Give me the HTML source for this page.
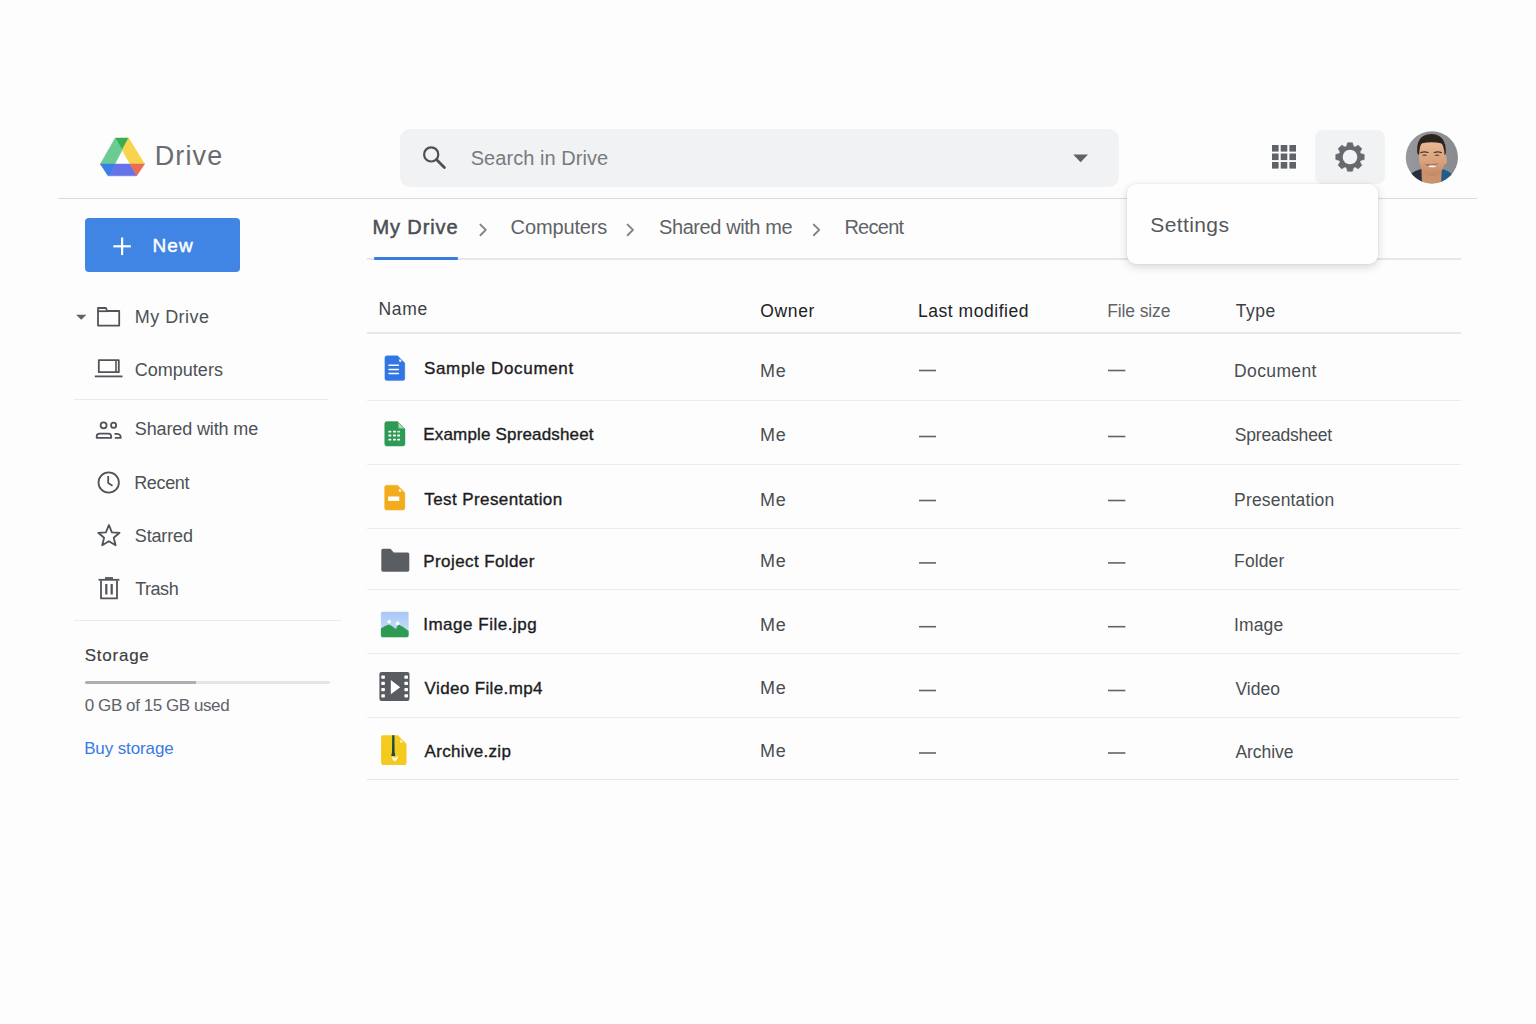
<!DOCTYPE html>
<html><head><meta charset="utf-8">
<style>
html,body{margin:0;padding:0;}
body{width:1536px;height:1024px;background:#fdfdfd;position:relative;overflow:hidden;font-family:"Liberation Sans",sans-serif;}
.t{position:absolute;white-space:nowrap;line-height:normal;}
.a{position:absolute;}
.hl{position:absolute;height:1px;background:#e6e8eb;}
svg{position:absolute;overflow:visible;}
</style></head><body>
<!-- header divider -->
<div class="hl" style="left:58px;top:198px;width:1419px;background:#d9dbdf;"></div>
<!-- drive logo -->
<svg style="left:0;top:0" width="1536" height="1024" viewBox="0 0 1536 1024">
  <polygon points="115.2,138 128.6,138 122.2,149.9" fill="#3aac52" stroke="#3aac52" stroke-width="0.5" stroke-linejoin="round"/>
  <polygon points="115.2,138 122.2,149.9 114.9,164 100.4,164" fill="#6ccb90" stroke="#6ccb90" stroke-width="0.5" stroke-linejoin="round"/>
  <polygon points="128.6,138 144.6,164 130,164 122.2,149.9" fill="#f8d44e" stroke="#f8d44e" stroke-width="0.5" stroke-linejoin="round"/>
  <polygon points="100.3,164 114.9,164 110.2,175.8 108,175.8" fill="#3c7ee8" stroke="#3c7ee8" stroke-width="0.5" stroke-linejoin="round"/>
  <polygon points="114.9,164 130,164 136.7,175.8 110.2,175.8" fill="#6474e8" stroke="#6474e8" stroke-width="0.5" stroke-linejoin="round"/>
  <polygon points="130,164 144.6,164 136.7,175.8" fill="#e86d57" stroke="#e86d57" stroke-width="0.5" stroke-linejoin="round"/>
</svg>
<!-- search bar -->
<div class="a" style="left:400px;top:129px;width:719px;height:58px;border-radius:10px;background:#f1f2f4;"></div>
<svg style="left:0;top:0" width="1536" height="1024">
  <circle cx="431.2" cy="154.4" r="7.1" fill="none" stroke="#4d5156" stroke-width="2.2"/>
  <line x1="436.4" y1="159.6" x2="444.4" y2="167.4" stroke="#4d5156" stroke-width="2.8" stroke-linecap="round"/>
  <polygon points="1073.2,154.4 1088,154.4 1080.6,162.2" fill="#5f6368"/>
</svg>
<!-- grid icon -->
<svg style="left:1271.5px;top:144.6px" width="25" height="24">
  <g fill="#5f6368">
  <rect x="0" y="0" width="6.6" height="6.6"/><rect x="8.7" y="0" width="6.6" height="6.6"/><rect x="17.4" y="0" width="6.6" height="6.6"/>
  <rect x="0" y="8.5" width="6.6" height="6.6"/><rect x="8.7" y="8.5" width="6.6" height="6.6"/><rect x="17.4" y="8.5" width="6.6" height="6.6"/>
  <rect x="0" y="17" width="6.6" height="6.6"/><rect x="8.7" y="17" width="6.6" height="6.6"/><rect x="17.4" y="17" width="6.6" height="6.6"/>
  </g>
</svg>
<!-- settings button -->
<div class="a" style="left:1315px;top:130px;width:70px;height:54px;border-radius:8px;background:#f1f2f4;"></div>
<svg style="left:1349.9px;top:157.1px" width="1" height="1">
  <g fill="#66696d">
    <circle r="11.2"/>
    <path d="M-3.6,-10 L-2.5,-14.2 L2.5,-14.2 L3.6,-10 Z" transform="rotate(0)" stroke="#66696d" stroke-width="0.6" stroke-linejoin="round"/><path d="M-3.6,-10 L-2.5,-14.2 L2.5,-14.2 L3.6,-10 Z" transform="rotate(45)" stroke="#66696d" stroke-width="0.6" stroke-linejoin="round"/><path d="M-3.6,-10 L-2.5,-14.2 L2.5,-14.2 L3.6,-10 Z" transform="rotate(90)" stroke="#66696d" stroke-width="0.6" stroke-linejoin="round"/><path d="M-3.6,-10 L-2.5,-14.2 L2.5,-14.2 L3.6,-10 Z" transform="rotate(135)" stroke="#66696d" stroke-width="0.6" stroke-linejoin="round"/><path d="M-3.6,-10 L-2.5,-14.2 L2.5,-14.2 L3.6,-10 Z" transform="rotate(180)" stroke="#66696d" stroke-width="0.6" stroke-linejoin="round"/><path d="M-3.6,-10 L-2.5,-14.2 L2.5,-14.2 L3.6,-10 Z" transform="rotate(225)" stroke="#66696d" stroke-width="0.6" stroke-linejoin="round"/><path d="M-3.6,-10 L-2.5,-14.2 L2.5,-14.2 L3.6,-10 Z" transform="rotate(270)" stroke="#66696d" stroke-width="0.6" stroke-linejoin="round"/><path d="M-3.6,-10 L-2.5,-14.2 L2.5,-14.2 L3.6,-10 Z" transform="rotate(315)" stroke="#66696d" stroke-width="0.6" stroke-linejoin="round"/>
  </g>
  <circle r="7.3" fill="#f1f2f4"/>
</svg>
<!-- avatar -->
<svg style="left:1400px;top:127px" width="64" height="61" viewBox="0 0 1074 1024">
  <defs>
    <clipPath id="av"><circle cx="535" cy="510" r="438"/></clipPath>
    <linearGradient id="skin" x1="0" y1="0" x2="0" y2="1"><stop offset="0" stop-color="#e9b995"/><stop offset="0.6" stop-color="#d9a17b"/><stop offset="1" stop-color="#c28764"/></linearGradient>
    <linearGradient id="avbg" x1="0" y1="0" x2="1" y2="0"><stop offset="0" stop-color="#97999c"/><stop offset="1" stop-color="#88898c"/></linearGradient>
  </defs>
  <g clip-path="url(#av)">
    <rect width="1074" height="1024" fill="url(#avbg)"/>
    <path d="M150,980 L170,790 Q250,730 370,700 L380,1000 Z" fill="#272e3e"/>
    <path d="M680,700 Q800,720 870,790 L920,1000 L680,1000 Z" fill="#1f5b8b"/>
    <path d="M360,690 L700,690 L690,1000 L370,1000 Z" fill="#cc926c"/>
    <ellipse cx="748" cy="545" rx="38" ry="80" fill="#dca47e"/>
    <path d="M318,320 Q322,235 530,232 Q752,235 756,330 L752,560 Q742,720 645,800 Q540,850 435,800 Q338,720 322,560 Z" fill="url(#skin)"/>
    <path d="M290,440 Q262,130 520,118 Q775,122 770,430 L748,480 Q742,310 690,272 Q530,236 372,272 Q325,300 322,470 Z" fill="#2d231e"/>
    <path d="M350,430 Q410,405 470,428" stroke="#4a352b" stroke-width="22" fill="none" stroke-linecap="round"/>
    <path d="M575,428 Q635,405 695,430" stroke="#4a352b" stroke-width="22" fill="none" stroke-linecap="round"/>
    <ellipse cx="412" cy="475" rx="42" ry="13" fill="#6b4b3c"/>
    <ellipse cx="622" cy="475" rx="42" ry="13" fill="#6b4b3c"/>
    <path d="M405,615 Q520,720 648,605 Q525,640 405,615 Z" fill="#9c6a55"/>
    <ellipse cx="540" cy="660" rx="62" ry="17" fill="#f7f1eb"/>
  </g>
</svg>
<!-- tabs -->
<div class="hl" style="left:367px;top:258px;width:1094px;height:1.5px;background:#e4e6ea;"></div>
<div class="a" style="left:374px;top:256.6px;width:84px;height:3px;background:#3a7be0;border-radius:1px;"></div>
<svg style="left:0;top:0" width="1536" height="1024">
  <g fill="none" stroke="#7f8286" stroke-width="1.9" stroke-linecap="round" stroke-linejoin="round">
    <polyline points="480.4,224.6 485.8,229.9 480.4,235.2"/>
    <polyline points="627.6,224.6 633,229.9 627.6,235.2"/>
    <polyline points="813.8,224.6 819.2,229.9 813.8,235.2"/>
  </g>
</svg>
<!-- settings menu -->
<div class="a" style="left:1127px;top:184px;width:250.5px;height:79.5px;border-radius:9px;background:#fefefe;box-shadow:0 3px 8px rgba(60,64,67,0.20),0 0 2px rgba(60,64,67,0.12);"></div>
<!-- New button -->
<div class="a" style="left:85px;top:218.4px;width:154.7px;height:53.7px;border-radius:4px;background:#4085e3;"></div>
<svg style="left:0;top:0" width="1536" height="1024">
  <line x1="122.1" y1="237.5" x2="122.1" y2="255.1" stroke="#fff" stroke-width="2.2"/>
  <line x1="113.4" y1="246.3" x2="130.9" y2="246.3" stroke="#fff" stroke-width="2.2"/>
</svg>
<!-- sidebar icons -->
<svg style="left:0;top:0" width="1536" height="1024">
  <polygon points="76.1,314.7 86.4,314.7 81.25,319.8" fill="#5f6368"/>
  <g fill="none" stroke="#505458" stroke-width="1.8" stroke-linejoin="round">
    <!-- folder outline -->
    <path d="M98,312 L98,325.6 L119.2,325.6 L119.2,311 L107.2,311 L106,308 L98,308 Z"/>
    <line x1="98" y1="311.2" x2="107" y2="311.2"/>
    <!-- computer -->
    <rect x="98.8" y="360.2" width="20" height="12"/>
    <line x1="116" y1="361" x2="116" y2="372" stroke-width="1.6"/>
    <line x1="94.8" y1="376.4" x2="122.5" y2="376.4"/>
    <!-- clock -->
    <circle cx="108.7" cy="482.5" r="10.2"/>
    <polyline points="108.2,476 108.2,483 112.5,485.8"/>
    <!-- star -->
    <polygon points="108.9,525 111.9,532.3 119.6,532.8 113.7,537.8 115.6,545.3 108.9,541.2 102.2,545.3 104.1,537.8 98.2,532.8 105.9,532.3"/>
    <!-- trash -->
    <path d="M101,580.5 L101,598.4 L117,598.4 L117,580.5"/>
    <line x1="98.6" y1="579.8" x2="119.4" y2="579.8"/>
    <line x1="105" y1="578" x2="113" y2="578"/>
    <line x1="106.3" y1="584" x2="106.3" y2="594.5" stroke-width="2.2"/>
    <line x1="111.7" y1="584" x2="111.7" y2="594.5" stroke-width="2.2"/>
    <!-- shared -->
    <circle cx="103.6" cy="425.3" r="3.0"/>
    <circle cx="113.6" cy="425.3" r="2.6"/>
    <path d="M96.7,437.8 L96.7,436.3 Q96.7,433.7 99.6,433.7 L108.4,433.7 Q111.2,433.7 111.2,436.6 L111.2,437.8 Z"/>
    <path d="M114.5,433.9 L117.3,433.9 Q120.6,434.1 120.8,437.8 L114.9,437.8" />
  </g>
</svg>
<div class="hl" style="left:74px;top:398.5px;width:254px;background:#e8eaed;"></div>
<div class="hl" style="left:74px;top:620px;width:267px;background:#e8eaed;"></div>
<!-- storage bar -->
<div class="a" style="left:85px;top:681px;width:245px;height:3px;background:#e3e5e9;border-radius:1.5px;"></div>
<div class="a" style="left:85px;top:681px;width:111px;height:3px;background:#adafb1;border-radius:1.5px 0 0 1.5px;"></div>
<!-- table lines -->
<div class="hl" style="left:367px;top:332px;width:1094px;height:1.5px;background:#e6e8eb;"></div>
<div class="hl" style="left:367px;top:400px;width:1094px;background:#ebeced;"></div>
<div class="hl" style="left:367px;top:464px;width:1094px;background:#ebeced;"></div>
<div class="hl" style="left:367px;top:527.5px;width:1094px;background:#ebeced;"></div>
<div class="hl" style="left:367px;top:589.2px;width:1094px;background:#ebeced;"></div>
<div class="hl" style="left:367px;top:653px;width:1094px;background:#ebeced;"></div>
<div class="hl" style="left:367px;top:716.8px;width:1094px;background:#ebeced;"></div>
<div class="hl" style="left:367px;top:779.2px;width:1092px;background:#e3e5e9;"></div>
<!-- dashes -->
<svg style="left:0;top:0" width="1536" height="1024">
  <g stroke="#606468" stroke-width="1.6">
    <line x1="919" y1="370.5" x2="936" y2="370.5"/><line x1="1108" y1="370.5" x2="1125.4" y2="370.5"/>
    <line x1="919" y1="436.5" x2="936" y2="436.5"/><line x1="1108" y1="436.5" x2="1125.4" y2="436.5"/>
    <line x1="919" y1="500.5" x2="936" y2="500.5"/><line x1="1108" y1="500.5" x2="1125.4" y2="500.5"/>
    <line x1="919" y1="562.9" x2="936" y2="562.9"/><line x1="1108" y1="562.9" x2="1125.4" y2="562.9"/>
    <line x1="919" y1="626.7" x2="936" y2="626.7"/><line x1="1108" y1="626.7" x2="1125.4" y2="626.7"/>
    <line x1="919" y1="690.5" x2="936" y2="690.5"/><line x1="1108" y1="690.5" x2="1125.4" y2="690.5"/>
    <line x1="919" y1="753" x2="936" y2="753"/><line x1="1108" y1="753" x2="1125.4" y2="753"/>
  </g>
</svg>
<!-- file icons -->
<svg style="left:0;top:0" width="1536" height="1024">
  <!-- doc -->
  <path d="M386.9,355.8 L397.6,355.8 L404.8,363 L404.8,378.6 Q404.8,380.6 402.8,380.6 L386.9,380.6 Q384.9,380.6 384.9,378.6 L384.9,357.8 Q384.9,355.8 386.9,355.8 Z" fill="#3276e3" stroke="#3276e3" stroke-width="0.4" stroke-linejoin="round"/>
  <ellipse cx="400.2" cy="360.6" rx="1.1" ry="1.4" transform="rotate(-45 400.2 360.6)" fill="#e6eefc"/>
  <g stroke="#fff" stroke-width="1.5" stroke-linecap="round"><line x1="389" y1="365.3" x2="398.4" y2="365.3"/><line x1="389" y1="369.5" x2="398.4" y2="369.5"/><line x1="389" y1="373.4" x2="398.4" y2="373.4"/></g>
  <!-- sheet -->
  <path d="M386.7,421.6 L397.6,421.6 L405,429 L405,444.1 Q405,446.1 403,446.1 L386.7,446.1 Q384.7,446.1 384.7,444.1 L384.7,423.6 Q384.7,421.6 386.7,421.6 Z" fill="#2f9a56" stroke="#2f9a56" stroke-width="0.4" stroke-linejoin="round"/>
  <path d="M398.2,422.6 L404,428.4 L398.6,428.2 Z" fill="#a8dbb6"/>
  <g fill="#fff"><rect x="388.4" y="430.8" width="2.9" height="1.8" rx="0.6"/><rect x="393" y="430.8" width="2.9" height="1.8" rx="0.6"/><rect x="397.2" y="430.8" width="2.9" height="1.8" rx="0.6" fill="#cfe9d6"/>
  <rect x="388.4" y="434.6" width="2.9" height="1.8" rx="0.6"/><rect x="393" y="434.6" width="2.9" height="1.8" rx="0.6"/><rect x="397.2" y="434.6" width="2.9" height="1.8" rx="0.6"/>
  <rect x="388.4" y="438.7" width="2.9" height="1.8" rx="0.6"/><rect x="393" y="438.7" width="2.9" height="1.8" rx="0.6"/><rect x="397.2" y="438.7" width="2.9" height="1.8" rx="0.6"/></g>
  <!-- slides -->
  <path d="M386.6,485.3 L397.6,485.3 L404.9,492.7 L404.9,508.1 Q404.9,510.1 402.9,510.1 L386.6,510.1 Q384.6,510.1 384.6,508.1 L384.6,487.3 Q384.6,485.3 386.6,485.3 Z" fill="#f2ad1e" stroke="#f2ad1e" stroke-width="0.4" stroke-linejoin="round"/>
  <ellipse cx="399.9" cy="490.5" rx="1.1" ry="1.4" transform="rotate(-45 399.9 490.5)" fill="#fff"/>
  <rect x="388.1" y="496.5" width="11.2" height="4.4" fill="#fff"/>
  <!-- folder -->
  <path d="M383,548.8 L390.4,548.8 L393.8,552.6 L407.6,552.6 Q409.3,552.6 409.3,554.3 L409.3,570.1 Q409.3,571.8 407.6,571.8 L383,571.8 Q381.3,571.8 381.3,570.1 L381.3,550.5 Q381.3,548.8 383,548.8 Z" fill="#5a5e63"/>
  <!-- image -->
  <defs><linearGradient id="sky" x1="0" y1="0" x2="0" y2="1"><stop offset="0" stop-color="#a9c8f6"/><stop offset="1" stop-color="#cfe1f7"/></linearGradient></defs>
  <rect x="380.9" y="611.7" width="27.7" height="25.5" rx="1.6" fill="url(#sky)"/>
  <path d="M380.9,628.6 Q385,625.5 389,624.4 Q392,625.5 396,629 Q397,626 398.5,624.6 Q403,626.5 408.6,631 L408.6,635.6 Q408.6,637.2 407,637.2 L382.5,637.2 Q380.9,637.2 380.9,635.6 Z" fill="#2f9a52"/>
  <circle cx="389.2" cy="621.8" r="1.8" fill="#fff"/><circle cx="397.6" cy="623.4" r="1.8" fill="#fff"/>
  <!-- video -->
  <rect x="379.4" y="671.9" width="30.1" height="29" rx="2.2" fill="#585c61"/>
  <g fill="#fff">
    <rect x="381.3" y="675.45" width="3.6" height="3.3" rx="0.8"/><rect x="404.4" y="675.45" width="3.6" height="3.3" rx="0.8"/><rect x="381.3" y="681.65" width="3.6" height="3.3" rx="0.8"/><rect x="404.4" y="681.65" width="3.6" height="3.3" rx="0.8"/><rect x="381.3" y="687.95" width="3.6" height="3.3" rx="0.8"/><rect x="404.4" y="687.95" width="3.6" height="3.3" rx="0.8"/><rect x="381.3" y="694.15" width="3.6" height="3.3" rx="0.8"/><rect x="404.4" y="694.15" width="3.6" height="3.3" rx="0.8"/>
    <polygon points="390.8,680 400.2,687.2 390.8,694.2"/>
  </g>
  <!-- zip -->
  <path d="M383,735.3 L397.9,735.3 L406.5,744 L406.5,763 Q406.5,765 404.5,765 L383,765 Q381.1,765 381.1,763 L381.1,737.3 Q381.1,735.3 383,735.3 Z" fill="#f5ca1e"/>
  <ellipse cx="401.2" cy="741.5" rx="1.1" ry="1.5" transform="rotate(-40 401.2 741.5)" fill="#fdf3c8"/>
  <path d="M392.2,735.3 L394.4,735.3 L394.6,752.5 Q395.4,754.5 395.2,756 L391.4,756 Q391.2,754.5 392,752.5 Z" fill="#1c4b3f"/>
  <path d="M391.6,756.2 Q392.5,761.5 395.5,760.8 Q398,759.5 397.9,755.5 Q396.5,758.2 393.8,757.8 Q392.5,757.6 391.6,756.2 Z" fill="#fffdf5"/>
</svg>
<div class="t" style="left:154.74px;top:141.06px;font-size:27px;color:#686c71;letter-spacing:1.116px;">Drive</div>
<div class="t" style="left:470.70px;top:146.90px;font-size:20px;color:#777b80;letter-spacing:0.050px;">Search in Drive</div>
<div class="t" style="left:372.40px;top:216.10px;font-size:20px;color:#4b4f53;letter-spacing:0.900px;-webkit-text-stroke:0.5px #4b4f53;">My Drive</div>
<div class="t" style="left:510.60px;top:216.10px;font-size:20px;color:#5f6368;letter-spacing:-0.137px;">Computers</div>
<div class="t" style="left:659.00px;top:216.10px;font-size:20px;color:#5f6368;letter-spacing:-0.415px;">Shared with me</div>
<div class="t" style="left:844.40px;top:216.10px;font-size:20px;color:#5f6368;letter-spacing:-0.720px;">Recent</div>
<div class="t" style="left:1150.26px;top:212.59px;font-size:21px;color:#55585c;letter-spacing:0.395px;">Settings</div>
<div class="t" style="left:152.58px;top:235.00px;font-size:19px;color:#ffffff;letter-spacing:1.062px;-webkit-text-stroke:0.45px #ffffff;">New</div>
<div class="t" style="left:134.76px;top:307.21px;font-size:18px;color:#4d5155;letter-spacing:0.463px;">My Drive</div>
<div class="t" style="left:134.70px;top:360.41px;font-size:18px;color:#4d5155;letter-spacing:0.026px;">Computers</div>
<div class="t" style="left:134.79px;top:418.71px;font-size:18px;color:#4d5155;letter-spacing:-0.122px;">Shared with me</div>
<div class="t" style="left:134.16px;top:472.71px;font-size:18px;color:#4d5155;letter-spacing:-0.328px;">Recent</div>
<div class="t" style="left:134.79px;top:526.11px;font-size:18px;color:#4d5155;letter-spacing:-0.143px;">Starred</div>
<div class="t" style="left:135.24px;top:579.01px;font-size:18px;color:#4d5155;letter-spacing:-0.482px;">Trash</div>
<div class="t" style="left:84.73px;top:646.01px;font-size:17px;color:#3c4043;letter-spacing:0.755px;-webkit-text-stroke:0.15px #3c4043;">Storage</div>
<div class="t" style="left:84.82px;top:696.12px;font-size:17px;color:#5f6368;letter-spacing:-0.433px;">0 GB of 15 GB used</div>
<div class="t" style="left:84.14px;top:738.82px;font-size:17px;color:#3a7be0;letter-spacing:-0.117px;">Buy storage</div>
<div class="t" style="left:378.50px;top:299.46px;font-size:17.5px;color:#3c4043;letter-spacing:0.683px;">Name</div>
<div class="t" style="left:760.31px;top:300.96px;font-size:17.5px;color:#202124;letter-spacing:0.650px;">Owner</div>
<div class="t" style="left:917.90px;top:300.96px;font-size:17.5px;color:#202124;letter-spacing:0.542px;">Last modified</div>
<div class="t" style="left:1107.20px;top:300.96px;font-size:17.5px;color:#5f6368;letter-spacing:-0.119px;">File size</div>
<div class="t" style="left:1235.65px;top:300.96px;font-size:17.5px;color:#3c4043;letter-spacing:0.517px;">Type</div>
<div class="t" style="left:423.94px;top:359.31px;font-size:17px;color:#1c1c1e;letter-spacing:0.673px;-webkit-text-stroke:0.35px #1c1c1e;">Sample Document</div>
<div class="t" style="left:759.96px;top:360.71px;font-size:18px;color:#4a4d51;letter-spacing:0.830px;">Me</div>
<div class="t" style="left:1234.10px;top:361.16px;font-size:17.5px;color:#4a4d51;letter-spacing:0.368px;">Document</div>
<div class="t" style="left:423.34px;top:425.42px;font-size:17px;color:#1c1c1e;letter-spacing:0.164px;-webkit-text-stroke:0.35px #1c1c1e;">Example Spreadsheet</div>
<div class="t" style="left:759.96px;top:425.01px;font-size:18px;color:#4a4d51;letter-spacing:0.830px;">Me</div>
<div class="t" style="left:1234.71px;top:425.46px;font-size:17.5px;color:#4a4d51;letter-spacing:-0.185px;">Spreadsheet</div>
<div class="t" style="left:424.36px;top:489.81px;font-size:17px;color:#1c1c1e;letter-spacing:0.401px;-webkit-text-stroke:0.35px #1c1c1e;">Test Presentation</div>
<div class="t" style="left:759.96px;top:489.61px;font-size:18px;color:#4a4d51;letter-spacing:0.830px;">Me</div>
<div class="t" style="left:1234.10px;top:490.06px;font-size:17.5px;color:#4a4d51;letter-spacing:0.170px;">Presentation</div>
<div class="t" style="left:423.34px;top:551.51px;font-size:17px;color:#1c1c1e;letter-spacing:0.398px;-webkit-text-stroke:0.35px #1c1c1e;">Project Folder</div>
<div class="t" style="left:759.96px;top:550.91px;font-size:18px;color:#4a4d51;letter-spacing:0.830px;">Me</div>
<div class="t" style="left:1234.10px;top:551.36px;font-size:17.5px;color:#4a4d51;letter-spacing:0.108px;">Folder</div>
<div class="t" style="left:423.17px;top:615.22px;font-size:17px;color:#1c1c1e;letter-spacing:0.521px;-webkit-text-stroke:0.35px #1c1c1e;">Image File.jpg</div>
<div class="t" style="left:759.96px;top:614.71px;font-size:18px;color:#4a4d51;letter-spacing:0.830px;">Me</div>
<div class="t" style="left:1233.92px;top:615.16px;font-size:17.5px;color:#4a4d51;letter-spacing:0.153px;">Image</div>
<div class="t" style="left:424.62px;top:678.82px;font-size:17px;color:#1c1c1e;letter-spacing:0.365px;-webkit-text-stroke:0.35px #1c1c1e;">Video File.mp4</div>
<div class="t" style="left:759.96px;top:678.41px;font-size:18px;color:#4a4d51;letter-spacing:0.830px;">Me</div>
<div class="t" style="left:1235.41px;top:678.86px;font-size:17.5px;color:#4a4d51;letter-spacing:0.034px;">Video</div>
<div class="t" style="left:424.62px;top:741.62px;font-size:17px;color:#1c1c1e;letter-spacing:0.314px;-webkit-text-stroke:0.35px #1c1c1e;">Archive.zip</div>
<div class="t" style="left:759.96px;top:741.11px;font-size:18px;color:#4a4d51;letter-spacing:0.830px;">Me</div>
<div class="t" style="left:1235.41px;top:741.56px;font-size:17.5px;color:#4a4d51;letter-spacing:-0.048px;">Archive</div>
</body></html>
